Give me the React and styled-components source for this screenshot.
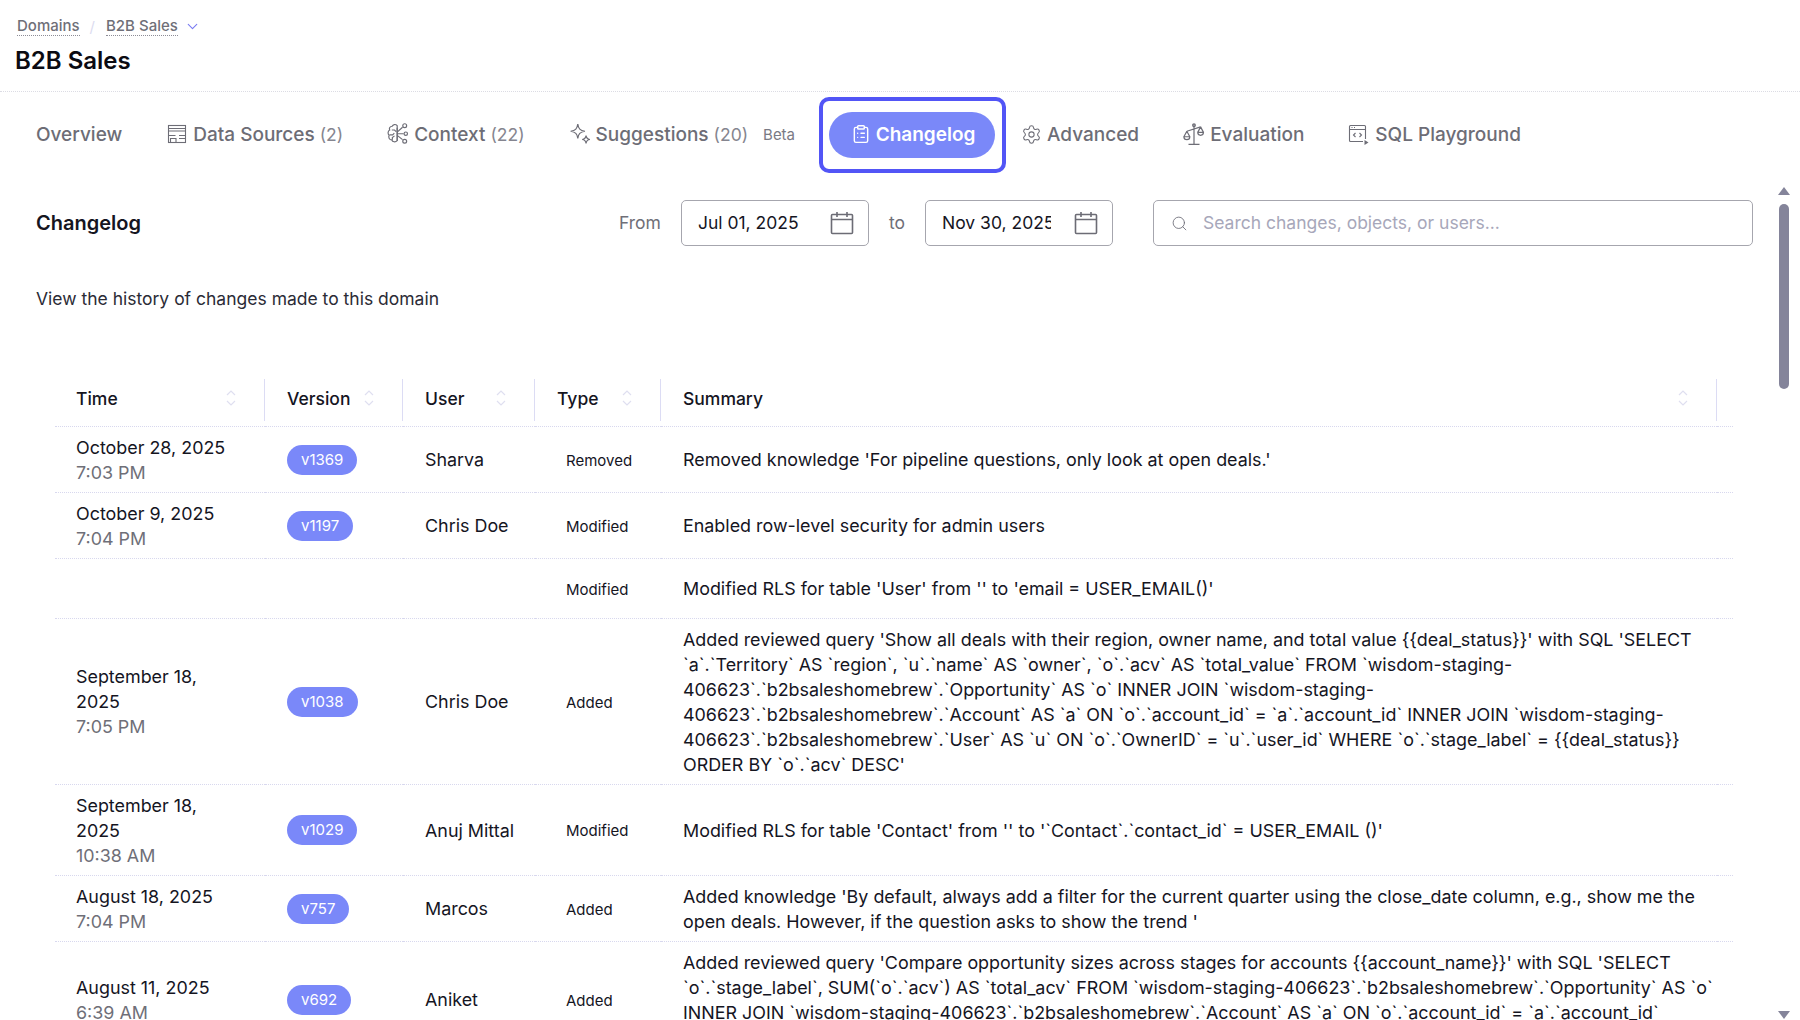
import React from "react";
import styled, { createGlobalStyle } from "styled-components";
import { ChevronDown, ClipboardList, Search, Settings } from "lucide-react";

const rows = [
  {
    date: "October 28, 2025",
    time: "7:03 PM",
    version: "v1369",
    user: "Sharva",
    type: "Removed",
    summary: "Removed knowledge 'For pipeline questions, only look at open deals.'",
  },
  {
    date: "October 9, 2025",
    time: "7:04 PM",
    version: "v1197",
    user: "Chris Doe",
    type: "Modified",
    summary: "Enabled row-level security for admin users",
  },
  {
    type: "Modified",
    summary: "Modified RLS for table 'User' from '' to 'email = USER_EMAIL()'",
    short: true,
  },
  {
    date: "September 18, 2025",
    time: "7:05 PM",
    version: "v1038",
    user: "Chris Doe",
    type: "Added",
    summary:
      "Added reviewed query 'Show all deals with their region, owner name, and total value {{deal_status}}' with SQL 'SELECT `a`.`Territory` AS `region`, `u`.`name` AS `owner`, `o`.`acv` AS `total_value` FROM `wisdom-staging-406623`.`b2bsaleshomebrew`.`Opportunity` AS `o` INNER JOIN `wisdom-staging-406623`.`b2bsaleshomebrew`.`Account` AS `a` ON `o`.`account_id` = `a`.`account_id` INNER JOIN `wisdom-staging-406623`.`b2bsaleshomebrew`.`User` AS `u` ON `o`.`OwnerID` = `u`.`user_id` WHERE `o`.`stage_label` = {{deal_status}} ORDER BY `o`.`acv` DESC'",
  },
  {
    date: "September 18, 2025",
    time: "10:38 AM",
    version: "v1029",
    user: "Anuj Mittal",
    type: "Modified",
    summary: "Modified RLS for table 'Contact' from '' to '`Contact`.`contact_id` = USER_EMAIL ()'",
  },
  {
    date: "August 18, 2025",
    time: "7:04 PM",
    version: "v757",
    user: "Marcos",
    type: "Added",
    summary:
      "Added knowledge 'By default, always add a filter for the current quarter using the close_date column, e.g., show me the open deals. However, if the question asks to show the trend '",
  },
  {
    date: "August 11, 2025",
    time: "6:39 AM",
    version: "v692",
    user: "Aniket",
    type: "Added",
    summary:
      "Added reviewed query 'Compare opportunity sizes across stages for accounts {{account_name}}' with SQL 'SELECT `o`.`stage_label`, SUM(`o`.`acv`) AS `total_acv` FROM `wisdom-staging-406623`.`b2bsaleshomebrew`.`Opportunity` AS `o` INNER JOIN `wisdom-staging-406623`.`b2bsaleshomebrew`.`Account` AS `a` ON `o`.`account_id` = `a`.`account_id` GROUP BY `o`.`stage_label` ORDER BY `total_acv` DESC'",
  },
];

const columns = [
  { label: "Time", width: 210 },
  { label: "Version", width: 138 },
  { label: "User", width: 132 },
  { label: "Type", width: 126 },
  { label: "Summary", width: 1056 },
];

function DataSourcesIcon() {
  return (
    <TabSvg viewBox="0 0 22 22">
      <rect x="2.500" y="2.500" width="17" height="17" />
      <path d="M2.500 5.500h17M2.500 8h17M2.500 12.500h7M13 12.500h6.500M10 19.500v-4H4.500v4M13 15.500h6.500" />
    </TabSvg>
  );
}

function ContextIcon() {
  return (
    <TabSvg viewBox="1.500 1 20.500 20.500">
      <path d="M11 3.500C9.500 1.800 7 2.200 6.300 4 4.200 4 3.200 6 4 7.500 2.200 8.500 2 11.200 3.500 12.500 2.500 14.500 3.800 16.800 6 16.800c.6 1.900 3.300 2.400 5 .7z" />
      <path d="M6 7.500h2.500l1.500 1.500M3.800 12h3l1.500-1.500M6.500 16.500v-2l2-1.500M11 5.500v12" />
      <path d="M11 9.500l5-4.500M11 11h6M11 12.500l5 4" />
      <circle cx="18" cy="3.500" r="1.800" />
      <circle cx="19" cy="11" r="1.600" />
      <circle cx="18" cy="18" r="1.800" />
    </TabSvg>
  );
}

function SuggestionsIcon() {
  return (
    <TabSvg viewBox="1 1 20 20">
      <path d="M9 2c.6 4.200 2 5.800 6.500 6.500C11 9.200 9.600 10.800 9 15c-.6-4.200-2-5.800-6.500-6.500C7 7.800 8.400 6.200 9 2z" />
      <path d="M16.500 12.500c.3 2.400 1 3.200 3.500 3.500-2.500.3-3.200 1.100-3.500 3.500-.3-2.400-1-3.200-3.500-3.500 2.500-.3 3.200-1.100 3.500-3.500z" />
    </TabSvg>
  );
}

function EvaluationIcon() {
  return (
    <TabSvg viewBox="1 1 20 20">
      <path d="M11 2v18M6 20.500h10M4.500 8.500L17 4.500" />
      <circle cx="11" cy="3" r="1.200" />
      <path d="M4.500 8.500L1.800 13.500M4.500 8.500l2.700 5M1.800 13.500c0 3.600 5.400 3.600 5.400 0zM2.200 13.500h4.600" />
      <path d="M17 4.500l-2.600 5M17 4.500l2.600 5M14.400 9.500c0 3.600 5.200 3.600 5.200 0zM14.800 9.500h4.400" />
    </TabSvg>
  );
}

function PlaygroundIcon() {
  return (
    <TabSvg viewBox="0 0 22 22">
      <path d="M17.500 16V3.500a1 1 0 0 0-1-1h-14a1 1 0 0 0-1 1v14a1 1 0 0 0 1 1H15" />
      <path d="M1.500 6.500h16M3.500 4.500h1M6 4.500h1" />
      <path d="M7.500 10l-2 2 2 2M11.500 10l2 2-2 2" />
      <FilledPath d="M16.500 17l4 2.500-4 2.500z" />
    </TabSvg>
  );
}

function CalendarIcon() {
  return (
    <CalendarSvg viewBox="0 0 24 24">
      <rect x="1.500" y="3.500" width="21" height="19" rx="1" />
      <path d="M1.500 8.500h21M7 1v5M17 1v5" />
    </CalendarSvg>
  );
}

function SortIcon() {
  return (
    <SortSvg viewBox="0 0 12 20">
      <path d="M2 7l4-4 4 4M2 13l4 4 4-4" />
    </SortSvg>
  );
}

export default function App() {
  return (
    <Page>
      <GlobalStyle />
      <Header>
        <Breadcrumbs>
          <Crumb>Domains</Crumb>
          <CrumbDivider>/</CrumbDivider>
          <Crumb>B2B Sales</Crumb>
          <CrumbChevron size={17} strokeWidth={1.6} />
        </Breadcrumbs>
        <Title>B2B Sales</Title>
      </Header>

      <Tabs>
        <Tab>Overview</Tab>
        <Tab>
          <DataSourcesIcon />
          Data Sources <Count>(2)</Count>
        </Tab>
        <Tab>
          <ContextIcon />
          Context <Count>(22)</Count>
        </Tab>
        <Tab>
          <SuggestionsIcon />
          Suggestions <Count>(20)</Count>
          <Beta>Beta</Beta>
        </Tab>
        <FocusFrame>
          <ActivePill>
            <ClipboardList size={20} strokeWidth={1.7} />
            Changelog
          </ActivePill>
        </FocusFrame>
        <Tab>
          <Settings size={21} strokeWidth={1.2} />
          Advanced
        </Tab>
        <Tab>
          <EvaluationIcon />
          Evaluation
        </Tab>
        <Tab>
          <PlaygroundIcon />
          SQL Playground
        </Tab>
      </Tabs>

      <Content>
        <Toolbar>
          <Heading>Changelog</Heading>
          <DateFilters>
            <FilterLabel>From</FilterLabel>
            <DateBox>
              <DateInput readOnly value="Jul 01, 2025" />
              <CalendarIcon />
            </DateBox>
            <FilterLabel>to</FilterLabel>
            <DateBox>
              <DateInput readOnly value="Nov 30, 2025" />
              <CalendarIcon />
            </DateBox>
          </DateFilters>
          <SearchBox>
            <Search size={17} strokeWidth={1.2} color="#6a6a75" />
            <SearchInput placeholder="Search changes, objects, or users..." />
          </SearchBox>
        </Toolbar>

        <Description>View the history of changes made to this domain</Description>

        <Table>
          <colgroup>
            {columns.map((col) => (
              <col key={col.label} style={{ width: col.width }} />
            ))}
            <col />
          </colgroup>
          <thead>
            <tr>
              {columns.map((col) => (
                <HeadCell key={col.label}>
                  <HeadInner>
                    {col.label}
                    <SortIcon />
                  </HeadInner>
                </HeadCell>
              ))}
              <GutterCell />
            </tr>
          </thead>
          <tbody>
            {rows.map((row, i) => (
              <Row key={i} $short={row.short}>
                <Cell>
                  <DateText>{row.date}</DateText>
                  <TimeText>{row.time}</TimeText>
                </Cell>
                <Cell>{row.version && <VersionBadge>{row.version}</VersionBadge>}</Cell>
                <Cell>
                  <UserName>{row.user}</UserName>
                </Cell>
                <Cell>
                  <TypeLabel>{row.type}</TypeLabel>
                </Cell>
                <SummaryCell>{row.summary}</SummaryCell>
                <GutterBody />
              </Row>
            ))}
          </tbody>
        </Table>
      </Content>

      <Scrollbar>
        <ArrowUp />
        <Thumb />
        <ArrowDown />
      </Scrollbar>
    </Page>
  );
}

const GlobalStyle = createGlobalStyle`
  html, body {
    margin: 0;
    padding: 0;
    background: #fff;
  }
  body {
    font-family: Inter, "Liberation Sans", sans-serif;
    color: #15151f;
  }
`;

const Page = styled.div`
  position: relative;
  height: 1020px;
  overflow: hidden;
  background: #fff;
`;

const Header = styled.header`
  height: 92px;
  box-sizing: border-box;
  padding: 16px 17px 0;
  border-bottom: 1px dotted #dcdce4;
`;

const Breadcrumbs = styled.div`
  display: flex;
  align-items: center;
  height: 20px;
  font-size: 15px;
  font-weight: 500;
  color: #6f6f78;
`;

const Crumb = styled.span`
  line-height: 18px;
  border-bottom: 1px dotted #8c8c96;
`;

const CrumbDivider = styled.span`
  margin: 0 11px 0 10px;
  color: #dcdcf0;
  font-weight: 400;
`;

const CrumbChevron = styled(ChevronDown)`
  margin-left: 6px;
  color: #7a7cf2;
`;

const Title = styled.h1`
  margin: 8px 0 0 -2px;
  font-size: 24px;
  line-height: 34px;
  font-weight: 600;
  color: #0b0b12;
`;

const Tabs = styled.nav`
  display: flex;
  align-items: center;
  height: 76px;
  margin-top: 5px;
  padding-left: 14px;
`;

const Tab = styled.div`
  display: flex;
  align-items: center;
  gap: 5px;
  padding: 0 22px 2px;
  font-size: 19px;
  font-weight: 500;
  color: #6d6d76;
  white-space: nowrap;
`;

const TabSvg = styled.svg`
  width: 22px;
  height: 22px;
  fill: none;
  stroke: #6d6d76;
  stroke-width: 1.100;
`;

const FilledPath = styled.path`
  fill: #6d6d76;
  stroke: none;
`;

const Count = styled.span`
  font-size: 17.500px;
  font-weight: 400;
  color: #85858f;
`;

const Beta = styled.span`
  margin-left: 10px;
  font-size: 15px;
  font-weight: 400;
  color: #7a7a84;
`;

const FocusFrame = styled.div`
  box-sizing: border-box;
  display: flex;
  align-items: center;
  height: 76px;
  margin: 0 -7px 0 2px;
  padding: 0 7px 0 6px;
  border: 4px solid #5255f6;
  border-radius: 10px;
`;

const ActivePill = styled.div`
  box-sizing: border-box;
  display: flex;
  align-items: center;
  justify-content: center;
  gap: 5px;
  width: 166px;
  height: 46px;
  padding: 0 0 2px 2px;
  border-radius: 23px;
  background: #7a88f9;
  color: #fff;
  font-size: 19px;
  font-weight: 600;
`;

const Content = styled.main`
  padding: 27px 47px 0 36px;
`;

const Toolbar = styled.div`
  display: flex;
  align-items: center;
  height: 46px;
`;

const Heading = styled.h2`
  margin: 0;
  font-size: 20px;
  font-weight: 600;
  color: #15151f;
`;

const DateFilters = styled.div`
  display: flex;
  align-items: center;
  gap: 20px;
  margin-left: auto;
`;

const FilterLabel = styled.span`
  padding-bottom: 2px;
  font-size: 17.500px;
  color: #6f6f78;
`;

const DateBox = styled.div`
  box-sizing: border-box;
  display: flex;
  align-items: center;
  justify-content: space-between;
  width: 188px;
  height: 46px;
  padding: 0 14px 0 16px;
  border: 1px solid #a6a6ae;
  border-radius: 5px;
`;

const DateInput = styled.input`
  width: 109px;
  padding: 0 0 2px;
  border: 0;
  outline: 0;
  font: 400 17.500px Inter, sans-serif;
  color: #15151f;
`;

const CalendarSvg = styled.svg`
  flex: none;
  width: 24px;
  height: 24px;
  fill: none;
  stroke: #6c6c75;
  stroke-width: 1.600;
`;

const SearchBox = styled.div`
  box-sizing: border-box;
  display: flex;
  align-items: center;
  gap: 15px;
  width: 600px;
  height: 46px;
  margin-left: 40px;
  padding: 0 17px;
  border: 1px solid #a6a6ae;
  border-radius: 5px;
`;

const SearchInput = styled.input`
  flex: 1;
  padding: 0 0 2px;
  border: 0;
  outline: 0;
  font: 400 17.500px Inter, sans-serif;
  &::placeholder {
    color: #a7a7ba;
    opacity: 1;
  }
`;

const Description = styled.p`
  margin: 40px 0 0;
  font-size: 17.500px;
  line-height: 25px;
  color: #2b2b36;
`;

const Table = styled.table`
  width: 1678px;
  margin: 59px 0 0 19px;
  border-collapse: collapse;
  table-layout: fixed;
  font-size: 17.900px;
  line-height: 25px;
`;

const HeadCell = styled.th`
  position: relative;
  height: 56px;
  padding: 0 28px 0 22px;
  font-size: 17.500px;
  font-weight: 500;
  text-align: left;
  border-bottom: 1px dotted #d8d8ee;
  &:first-child {
    padding-left: 21px;
  }
  &::after {
    content: "";
    position: absolute;
    right: 0;
    top: 9px;
    bottom: 5px;
    width: 1px;
    background: #dcdcf4;
  }
`;

const GutterCell = styled.th`
  border-bottom: 1px dotted #d8d8ee;
`;

const HeadInner = styled.div`
  display: flex;
  align-items: center;
  justify-content: space-between;
  gap: 8px;
`;

const SortSvg = styled.svg`
  flex: none;
  width: 12px;
  height: 20px;
  fill: none;
  stroke: #dfdff0;
  stroke-width: 1.200;
`;

const Row = styled.tr`
  height: ${(p) => (p.$short ? "60px" : "auto")};
  border-bottom: 1px dotted #d8d8ee;
`;

const Cell = styled.td`
  padding: 7.500px 22px;
  vertical-align: middle;
  &:first-child {
    padding-left: 21px;
  }
`;

const SummaryCell = styled(Cell)`
  padding-right: 3px;
`;

const GutterBody = styled.td`
  padding: 0;
`;

const DateText = styled.div`
  color: #15151f;
`;

const TimeText = styled.div`
  color: #6f6f78;
`;

const VersionBadge = styled.span`
  display: inline-block;
  padding: 0 14px;
  height: 30px;
  line-height: 30px;
  border-radius: 15px;
  background: #7a88f9;
  color: #fff;
  font-size: 15px;
`;

const UserName = styled.span`
  white-space: nowrap;
`;

const TypeLabel = styled.span`
  margin-left: 9px;
  font-size: 15px;
`;

const Scrollbar = styled.div`
  position: absolute;
  top: 186px;
  right: 10px;
  bottom: 0;
  width: 12px;
`;

const ArrowUp = styled.div`
  position: absolute;
  top: 1px;
  left: 0;
  border-left: 6px solid transparent;
  border-right: 6px solid transparent;
  border-bottom: 8px solid #84849a;
`;

const ArrowDown = styled.div`
  position: absolute;
  bottom: 1px;
  left: 0;
  border-left: 6px solid transparent;
  border-right: 6px solid transparent;
  border-top: 8px solid #84849a;
`;

const Thumb = styled.div`
  position: absolute;
  top: 18px;
  left: 1px;
  width: 10px;
  height: 185px;
  border-radius: 5px;
  background: #84849a;
`;
